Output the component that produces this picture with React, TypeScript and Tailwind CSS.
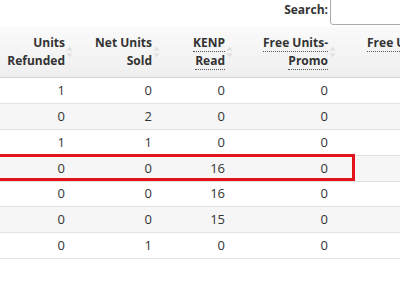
import React from "react";

const SortIcon = () => (
  <svg width="7" height="12" viewBox="0 0 7 12" className="absolute right-[3px] top-1/2 -translate-y-1/2">
    <path d="M3.5 0.5 L6.5 4.5 L0.5 4.5 Z" fill="#e0e0e0" />
    <path d="M3.5 11.5 L6.5 7.5 L0.5 7.5 Z" fill="#e0e0e0" />
  </svg>
);

const cols = [
  { w: "w-[76px]", l1: "Units", l2: "Refunded", abbr: false },
  { w: "w-[87px]", l1: "Net Units", l2: "Sold", abbr: false },
  { w: "w-[73px]", l1: "KENP", l2: "Read", abbr: true },
  { w: "w-[103px]", l1: "Free Units-", l2: "Promo", abbr: true },
  { w: "w-[104px]", l1: "Free Units-", l2: "KU", abbr: true },
];

const rows = [
  ["1", "0", "0", "0", ""],
  ["0", "2", "0", "0", ""],
  ["1", "1", "0", "0", ""],
  ["0", "0", "16", "0", ""],
  ["0", "0", "16", "0", ""],
  ["0", "0", "15", "0", ""],
  ["0", "1", "0", "0", ""],
];

const heights = ["h-[26px]", "h-[26px]", "h-[26px]", "h-[26px]", "h-[25px]", "h-[26px]", "h-[26px]"];

export default function App() {
  return (
    <div
      className="relative w-[400px] h-[291px] overflow-hidden bg-white text-[#333]"
      style={{ fontFamily: '"Open Sans", "Liberation Sans", sans-serif' }}
    >
      <div className="flex h-[27px] w-[440px] items-start justify-end">
        <span className="mt-[1px] text-[12px] font-bold leading-[18px]">Search:</span>
        <div className="ml-[2px] -mt-[4px] h-[29px] w-[110px] shrink-0 rounded-[3px] border border-[#aaa] bg-white" />
      </div>
      <div className="w-[560px]">
        <div className="flex h-[51px] border-b border-[#d3d3d3] bg-gradient-to-b from-[#fafafa] to-[#efefef]">
          {cols.map((c, i) => (
            <div key={i} className={`relative ${c.w} flex shrink-0 flex-col items-end justify-center pr-[11px] text-[12px] font-bold leading-[18px]`}>
              <span className={c.abbr ? "border-b border-dotted border-[#555] leading-[16px]" : ""}>{c.l1}</span>
              <span className={c.abbr ? "mt-[1px] border-b border-dotted border-[#555] leading-[16px]" : ""}>{c.l2}</span>
              <SortIcon />
            </div>
          ))}
        </div>
        {rows.map((r, ri) => (
          <div
            key={ri}
            className={`flex ${heights[ri]} items-center border-b border-[#e2e2e2] text-[13px] ${ri % 2 === 1 ? "bg-[#f6f6f6]" : "bg-white"}`}
          >
            {r.map((v, ci) => (
              <div key={ci} className={`${cols[ci].w} shrink-0 pr-[11px] text-right`}>
                {v}
              </div>
            ))}
          </div>
        ))}
      </div>
      <div className="pointer-events-none absolute left-[-10px] top-[154px] h-[27px] w-[365px] border-[3px] border-[#e3131b]" />
    </div>
  );
}
